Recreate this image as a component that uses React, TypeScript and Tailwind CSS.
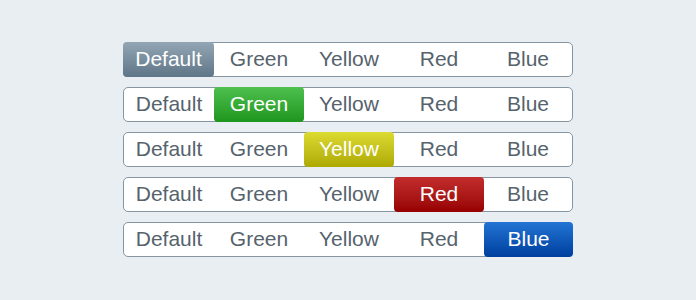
import React from "react";

const labels = ["Default", "Green", "Yellow", "Red", "Blue"];
const widths = ["w-[90px]", "w-[90px]", "w-[90px]", "w-[90px]", "w-[88px]"];
const activeBg = [
  "bg-gradient-to-b from-[#93a6b4] to-[#5f7688]",
  "bg-gradient-to-b from-[#4dc04d] to-[#1c961c]",
  "bg-gradient-to-b from-[#dcdb30] to-[#aea900]",
  "bg-gradient-to-b from-[#c32c2c] to-[#960000]",
  "bg-gradient-to-b from-[#2374d4] to-[#003f9e]",
];
const edge = ["-ml-px w-[91px]", "", "", "", "-mr-px w-[89px]"];

function Bar({ active }: { active: number }) {
  return (
    <div className="flex h-[35px] w-[450px] rounded-[5px] border border-[#8596a2] bg-white">
      {labels.map((l, i) =>
        i === active ? (
          <div
            key={l}
            className={`-my-px flex h-[35px] items-center justify-center rounded-[4px] pb-[2px] text-white ${activeBg[i]} ${edge[i] || widths[i]}`}
          >
            {l}
          </div>
        ) : (
          <div key={l} className={`flex items-center justify-center pb-[2px] text-[#56636d] ${widths[i]}`}>
            {l}
          </div>
        )
      )}
    </div>
  );
}

export default function App() {
  return (
    <div
      className="flex h-[300px] w-[696px] flex-col items-center gap-[10px] bg-[#e9eef2] pt-[42px] text-[21px] leading-none"
      style={{ fontFamily: '"Liberation Sans", Arial, sans-serif' }}
    >
      {[0, 1, 2, 3, 4].map((a) => (
        <Bar key={a} active={a} />
      ))}
    </div>
  );
}
